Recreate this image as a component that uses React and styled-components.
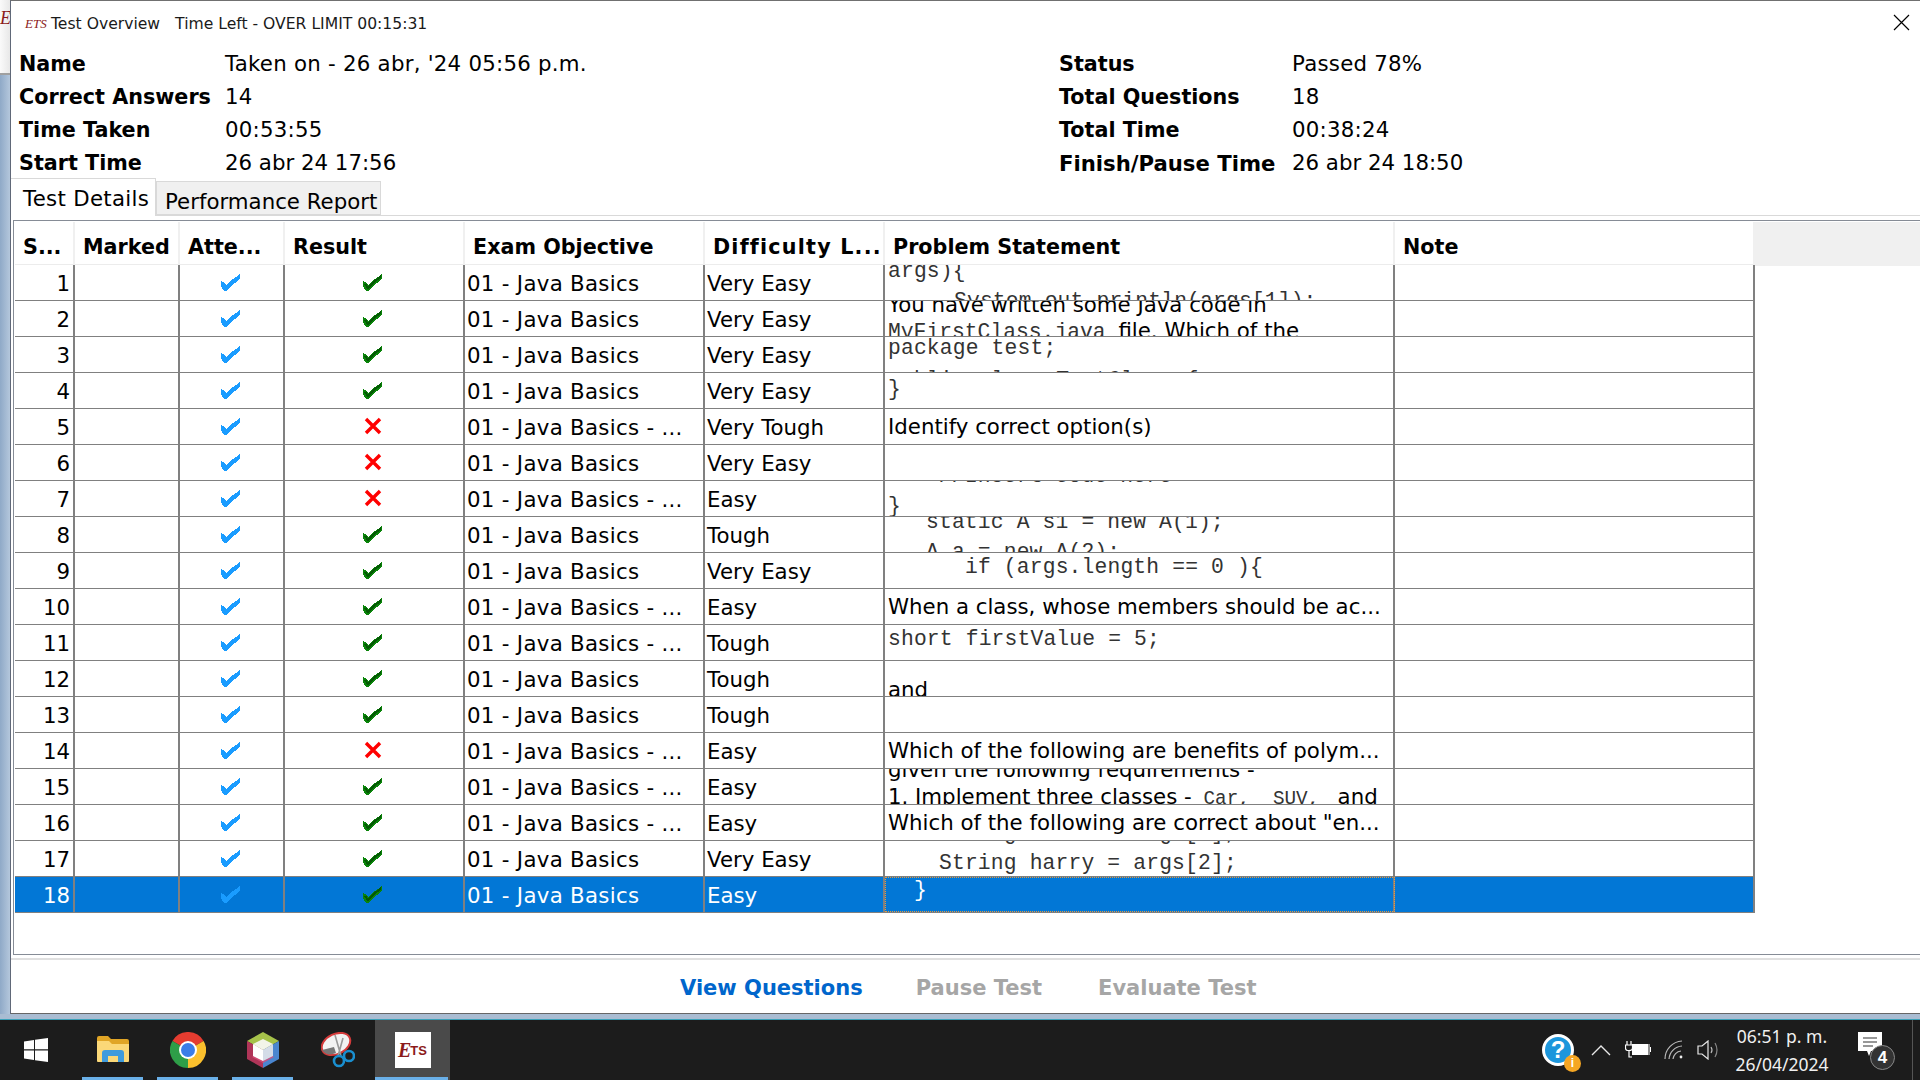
import React from "react";
import styled, { createGlobalStyle } from "styled-components";

const GlobalStyle = createGlobalStyle`
  html, body {
    margin: 0;
    padding: 0;
    background: #fff;
  }
  * {
    box-sizing: border-box;
  }
  body {
    font-family: "DejaVu Sans", "Liberation Sans", sans-serif;
    color: #000;
  }
`;

const Screen = styled.div`
  width: 1920px;
  height: 1080px;
  display: flex;
  flex-direction: column;
  overflow: hidden;
`;

const Desk = styled.div`
  display: flex;
  height: 1014px;
`;

const BackStrip = styled.div`
  width: 10px;
  display: flex;
  flex-direction: column;
  background: linear-gradient(90deg, #8fa9c7, #b4c7dc);
`;

const BackWindow = styled.div`
  height: 75px;
  padding-top: 8px;
  background: linear-gradient(90deg, #fafafa, #e8e8e8);
  border-bottom: 2px solid #a0a0a0;
  overflow: hidden;
  color: #8b1a1a;
  font: italic 18px "Liberation Serif", serif;
`;

const Window = styled.div`
  flex: 1;
  display: flex;
  flex-direction: column;
  background: #fff;
  border-top: 1px solid #707070;
  border-left: 1px solid #606878;
`;

const TitleBar = styled.div`
  height: 46px;
  display: flex;
  align-items: center;
  padding: 0 10px 0 14px;
  font-size: 15.6px;
  color: #1a1a1a;
`;

const TitleLogo = styled.span`
  width: 26px;
  color: #8b1a1a;
  font: italic 13px "Liberation Serif", serif;
`;

const TitleText = styled.span`
  margin-right: 15px;
`;

const Close = styled.svg`
  margin: -3px 0 0 auto;
  width: 17px;
  height: 17px;
`;

const Summary = styled.div`
  display: grid;
  grid-template-columns: 206px 834px 233px 1fr;
  grid-auto-rows: 33px;
  padding-left: 8px;
  height: 132px;
  font-size: 21.3px;
  line-height: 33px;
`;

const Label = styled.div`
  padding-top: 1px;
  font-size: ${(p) => p.$size || 20.7}px;
  font-weight: 700;
  white-space: nowrap;
`;

const Value = styled.div`
  letter-spacing: ${(p) => (p.$tight ? 0 : 0.25)}px;
`;

const Tabs = styled.div`
  display: flex;
  align-items: flex-end;
  height: 38px;
  margin-top: -1px;
  border-bottom: 1px solid #d9d9d9;
`;

const Tab = styled.div`
  font-size: 21.3px;
  height: ${(p) => (p.$active ? "38px" : "34px")};
  width: ${(p) => (p.$active ? "145px" : "225px")};
  margin-bottom: ${(p) => (p.$active ? "-1px" : "0")};
  padding: ${(p) => (p.$active ? "3px 0 0 12px" : "3px 0 0 8px")};
  background: ${(p) => (p.$active ? "#fff" : "#f0f0f0")};
  border: 1px solid #d9d9d9;
  border-left: ${(p) => (p.$active ? "none" : "1px solid #d9d9d9")};
  border-bottom: ${(p) => (p.$active ? "none" : "1px solid #d9d9d9")};
  letter-spacing: ${(p) => (p.$active ? 0.3 : 0)}px;
  line-height: 34px;
  white-space: nowrap;
`;

const Frame = styled.div`
  flex: 1;
  margin: 4px 0 0 2px;
  padding: 1px 0 0 1px;
  border-top: 1px solid #868c96;
  border-left: 1px solid #868c96;
  border-bottom: 1px solid #868c96;
`;

const HeaderRow = styled.div`
  display: grid;
  grid-template-columns: 60px 105px 105px 180px 240px 180px 510px 360px 1fr;
  height: 43px;
  border-bottom: 1px solid #ececec;
`;

const HeaderCell = styled.div`
  padding: 7px 0 0 ${(p) => p.$pad || 8}px;
  border-right: 2px solid #f0f0f0;
  font-size: 20.7px;
  font-weight: 700;
  letter-spacing: ${(p) => p.$spacing || 0}px;
  line-height: 37px;
  white-space: nowrap;
`;

const HeaderFiller = styled.div`
  background: #f0f0f0;
`;

const Row = styled.div`
  display: grid;
  grid-template-columns: 60px 105px 105px 180px 240px 180px 510px 360px;
  width: 1740px;
  height: 36px;
  border-bottom: 1px solid #808080;
  background: ${(p) => (p.$selected ? "#0277d6" : "#fff")};
  color: ${(p) => (p.$selected ? "#fff" : "#000")};
`;

const Cell = styled.div`
  border-right: 2px solid #808080;
  padding: 1px 3px 0 2px;
  overflow: hidden;
  display: flex;
  align-items: center;
  justify-content: ${(p) => p.$justify || "flex-start"};
  font-size: 21.3px;
  line-height: 35px;
  white-space: nowrap;
`;

const ExamCell = styled(Cell)`
  letter-spacing: 0.3px;
`;

const IconCell = styled(Cell)`
  justify-content: center;
  padding: 0 4px 2px 2px;
`;

const ProblemCell = styled.div`
  border-right: 2px solid #808080;
  overflow: hidden;
  padding-left: 3px;
  outline: ${(p) => (p.$focus ? "1px dotted #e89a3c" : "none")};
  outline-offset: -1px;
  white-space: pre;
`;

const ProblemLines = styled.div`
  margin-top: ${(p) => p.$top}px;
`;

const SansLine = styled.div`
  font-size: 21.3px;
  line-height: ${(p) => p.$height || 26}px;
`;

const CodeLine = styled.div`
  font-family: "Liberation Mono", monospace;
  font-size: 21.33px;
  letter-spacing: 0.15px;
  line-height: 30px;
  margin-top: ${(p) => p.$gap || 0}px;
  padding-left: ${(p) => p.$indent || 0}px;
  color: ${(p) => (p.$light ? "#fff" : "#333")};
`;

const InlineCode = styled.span`
  font-family: "Liberation Mono", monospace;
  font-size: ${(p) => p.$size || 21.33}px;
  margin-left: ${(p) => p.$gap || 0}px;
  color: #333;
`;

const Footer = styled.div`
  height: 56px;
  margin-top: 3px;
  padding: 2px 0 0 669px;
  display: flex;
  align-items: center;
  border-top: 2px solid #e0e0e0;
  border-bottom: 1px solid #666;
`;

const FooterButton = styled.div`
  margin-right: ${(p) => p.$gap || 0}px;
  font-size: 21px;
  font-weight: 700;
  color: ${(p) => (p.$enabled ? "#0066cc" : "#a6a6a6")};
`;

const BottomEdge = styled.div`
  height: 6px;
  background: #a9bcd2;
  border-bottom: 1px solid #3aa0b8;
`;

const Taskbar = styled.div`
  height: 60px;
  display: flex;
  align-items: stretch;
  background: #1c1c1c;
  color: #fff;
`;

const StartButton = styled.div`
  width: 75px;
  padding-left: 24px;
  display: flex;
  align-items: center;
`;

const TaskButton = styled.div`
  width: 75px;
  display: flex;
  align-items: center;
  justify-content: center;
  position: relative;
  background: ${(p) => (p.$active ? "#4a4a4a" : "transparent")};
  &::after {
    content: "";
    display: ${(p) => (p.$open ? "block" : "none")};
    position: absolute;
    left: ${(p) => (p.$active ? 0 : 7)}px;
    right: ${(p) => (p.$active ? 2 : 7)}px;
    bottom: 0;
    height: 3px;
    background: #6ab0e8;
  }
`;

const Tray = styled.div`
  margin-left: auto;
  display: flex;
  align-items: center;
  padding-right: 7px;
`;

const TraySlot = styled.div`
  width: ${(p) => p.$w}px;
  display: flex;
  justify-content: center;
  align-items: center;
`;

const HelpBadge = styled.div`
  width: 32px;
  height: 32px;
  border-radius: 50%;
  background: #1c96dc;
  border: 3px solid #fff;
  display: flex;
  align-items: center;
  justify-content: center;
  position: relative;
  font: 700 24px "Liberation Sans", sans-serif;
`;

const InfoBadge = styled.div`
  position: absolute;
  right: -10px;
  bottom: -9px;
  width: 17px;
  height: 17px;
  border-radius: 50%;
  background: #f5a623;
  font: 700 12px/17px "Liberation Sans", sans-serif;
  text-align: center;
`;

const Clock = styled.div`
  width: 112px;
  font: 17.5px/28px "Noto Sans", sans-serif;
  text-align: center;
  color: #f0f0f0;
  white-space: nowrap;
`;

const Notification = styled.div`
  position: relative;
  width: 56px;
  height: 36px;
  display: flex;
  padding-left: 20px;
  align-items: flex-start;
`;

const NotifyCount = styled.div`
  position: absolute;
  left: 32px;
  top: 13px;
  width: 25px;
  height: 25px;
  border-radius: 50%;
  background: #333;
  border: 1px solid #888;
  font: 700 17px/23px "Liberation Sans", sans-serif;
  text-align: center;
`;

const ShowDesktop = styled.div`
  width: 1px;
  align-self: stretch;
  margin-left: 18px;
  background: #555;
`;

const EtsTile = styled.div`
  width: 36px;
  height: 36px;
  background: #fff;
  color: #8b1a1a;
  display: flex;
  align-items: center;
  justify-content: center;
  font: italic 700 20px "Liberation Serif", serif;
  letter-spacing: -1px;
`;

const EtsSmall = styled.span`
  font: 700 13px "Liberation Sans", sans-serif;
  letter-spacing: 0;
`;

const BlueCheck = () => (
  <svg width="20" height="18" viewBox="0 0 20 18" shapeRendering="crispEdges">
    <polygon points="0,8 2,9 5,12 9,8 15,4 19,0 19,5 14,10 9,14 6,18 3,18 0,13" fill="#1a9cff" />
  </svg>
);

const GreenCheck = () => (
  <svg width="20" height="18" viewBox="0 0 20 18" shapeRendering="crispEdges">
    <polygon points="0,8 2,9 5,12 9,8 15,4 19,0 19,5 14,10 9,14 6,18 3,18 0,13" fill="#0a840a" />
    <polyline points="2,11 5,15 10,10 18,3" fill="none" stroke="#045804" strokeWidth="2" />
  </svg>
);

const RedCross = () => (
  <svg width="18" height="18" viewBox="0 0 18 18">
    <path d="M2 2 L16 16 M16 2 L2 16" stroke="#f00" strokeWidth="3.4" />
  </svg>
);

const WindowsLogo = () => (
  <svg width="24" height="24" viewBox="0 0 24 24" fill="#fff">
    <polygon points="0,3.5 10,2 10,11.3 0,11.3" />
    <polygon points="11,1.8 24,0 24,11.3 11,11.3" />
    <polygon points="0,12.5 10,12.5 10,22 0,20.5" />
    <polygon points="11,12.5 24,12.5 24,24 11,22.2" />
  </svg>
);

const FolderIcon = () => (
  <svg width="32" height="28" viewBox="0 0 32 28">
    <path d="M0 2 Q0 0 2 0 H11 L14 3 H30 Q32 3 32 5 V8 H0Z" fill="#e0a526" />
    <path d="M0 5 H12 L15 8 H32 V25 Q32 26 31 26 H1 Q0 26 0 25Z" fill="#fbd878" />
    <path d="M5 26 V17 Q5 14 8 14 H24 Q27 14 27 17 V26 H21 V20 H11 V26Z" fill="#3f9bdc" />
  </svg>
);

const ChromeIcon = () => (
  <svg width="36" height="36" viewBox="0 0 36 36">
    <path d="M18 18 L2.4 9 A18 18 0 0 1 33.6 9Z" fill="#e53c30" />
    <path d="M18 18 L33.6 9 A18 18 0 0 1 18 36Z" fill="#fbc02d" />
    <path d="M18 18 L18 36 A18 18 0 0 1 2.4 9Z" fill="#2e9e48" />
    <circle cx="18" cy="18" r="9" fill="#fff" />
    <circle cx="18" cy="18" r="7" fill="#3b7de8" />
  </svg>
);

const NetbeansIcon = () => (
  <svg width="32" height="36" viewBox="0 0 32 36">
    <polygon points="16,0 32,9 16,18 0,9" fill="#a6c24a" />
    <polygon points="0,9 16,18 16,36 0,27" fill="#b03558" />
    <polygon points="32,9 16,18 16,36 32,27" fill="#4a86d0" />
    <polygon points="16,31 5,25 16,18 27,25" fill="#d94f7a" opacity="0.8" />
    <polygon points="16,7 26,12 16,18 6,12" fill="#f2f4e8" />
    <polygon points="6,12 16,18 16,29 6,24" fill="#fff" />
    <polygon points="26,12 16,18 16,29 26,24" fill="#d4dce8" />
  </svg>
);

const SnipIcon = () => (
  <svg width="34" height="36" viewBox="0 0 34 36">
    <ellipse cx="15" cy="12" rx="15" ry="10" transform="rotate(-25 15 12)" fill="#f2f2f2" stroke="#d43a3a" strokeWidth="2" />
    <path d="M1 18 Q6 25 15 21 L13 15Z" fill="#777" />
    <path d="M14 3 L20 24 M22 6 L17 24" stroke="#999" strokeWidth="1.6" />
    <circle cx="18" cy="29" r="5" fill="none" stroke="#1a8fd0" strokeWidth="2.6" />
    <circle cx="28" cy="24" r="5" fill="none" stroke="#1a8fd0" strokeWidth="2.6" />
  </svg>
);

const ChevronIcon = () => (
  <svg width="20" height="12" viewBox="0 0 20 12">
    <path d="M1 11 L10 2 L19 11" fill="none" stroke="#e8e8e8" strokeWidth="1.4" />
  </svg>
);

const BatteryIcon = () => (
  <svg width="26" height="18" viewBox="0 0 26 18">
    <path d="M2 0 V4 M6 0 V4 M0.5 4 H7.5 V7 Q7.5 9.5 4 9.5 Q0.5 9.5 0.5 7Z M4 9.5 V16 H7" fill="none" stroke="#fff" strokeWidth="1.2" />
    <rect x="7" y="3" width="16" height="11" fill="#fff" />
    <rect x="23.5" y="3" width="1" height="11" fill="#fff" />
    <rect x="25" y="6" width="1" height="5" fill="#fff" />
  </svg>
);

const WifiIcon = () => (
  <svg width="20" height="20" viewBox="0 0 20 20" fill="none" stroke="#bbb" strokeWidth="1.2">
    <path d="M1 19 A18 18 0 0 1 18 1" />
    <path d="M5 19 A14 14 0 0 1 18 6" />
    <path d="M9 19 A9 9 0 0 1 17 11" />
    <circle cx="17" cy="17" r="1.4" fill="#eee" stroke="none" />
  </svg>
);

const SpeakerIcon = () => (
  <svg width="24" height="20" viewBox="0 0 24 20" fill="none" stroke="#e8e8e8" strokeWidth="1.2">
    <path d="M1 6 H5 L11 1 V19 L5 14 H1Z" />
    <path d="M14 7 Q16 10 14 13" stroke="#bbb" />
    <path d="M18 3 Q22 10 18 17" stroke="#888" />
  </svg>
);

const NotifyIcon = () => (
  <svg width="24" height="24" viewBox="0 0 24 24">
    <path d="M0 0 H24 V19 H13 L11 24 L9 19 H0Z" fill="#fff" />
    <path d="M5 6 H19 M5 10 H19 M5 14 H15" stroke="#333" strokeWidth="1.1" />
  </svg>
);

const rows = [
  { n: 1, ok: true, exam: "01 - Java Basics", diff: "Very Easy", top: -9, lines: [{ code: "args){" }, { code: "System.out.println(args[1]);", indent: 66 }] },
  { n: 2, ok: true, exam: "01 - Java Basics", diff: "Very Easy", top: -9, lines: [{ sans: "You have written some Java code in" }, { sans: "file. Which of the", before: "MyFirstClass.java" }] },
  { n: 3, ok: true, exam: "01 - Java Basics", diff: "Very Easy", top: -4, lines: [{ code: "package test;" }, { code: "public class TestClass {", gap: 2 }] },
  { n: 4, ok: true, exam: "01 - Java Basics", diff: "Very Easy", top: 1, lines: [{ code: "}" }] },
  { n: 5, ok: false, exam: "01 - Java Basics - ...", diff: "Very Tough", top: 5, lines: [{ sans: "Identify correct option(s)" }] },
  { n: 6, ok: false, exam: "01 - Java Basics", diff: "Very Easy", top: 0, lines: [] },
  { n: 7, ok: false, exam: "01 - Java Basics - ...", diff: "Easy", top: -20, lines: [{ code: "//Insert code here", indent: 51 }, { code: "}" }] },
  { n: 8, ok: true, exam: "01 - Java Basics", diff: "Tough", top: -10, lines: [{ code: "static A s1 = new A(1);", indent: 38 }, { code: "A a = new A(2);", indent: 38 }] },
  { n: 9, ok: true, exam: "01 - Java Basics", diff: "Very Easy", top: -1, lines: [{ code: "if (args.length == 0 ){", indent: 77 }] },
  { n: 10, ok: true, exam: "01 - Java Basics - ...", diff: "Easy", top: 5, lines: [{ sans: "When a class, whose members should be ac..." }] },
  { n: 11, ok: true, exam: "01 - Java Basics - ...", diff: "Tough", top: -1, lines: [{ code: "short firstValue = 5;" }] },
  { n: 12, ok: true, exam: "01 - Java Basics", diff: "Tough", top: 16, lines: [{ sans: "and" }] },
  { n: 13, ok: true, exam: "01 - Java Basics", diff: "Tough", top: 0, lines: [] },
  { n: 14, ok: false, exam: "01 - Java Basics - ...", diff: "Easy", top: 5, lines: [{ sans: "Which of the following are benefits of polym..." }] },
  { n: 15, ok: true, exam: "01 - Java Basics - ...", diff: "Easy", top: -13, lines: [{ sans: "given the following requirements -", height: 27 }, { sans: "1. Implement three classes - ", after: "Car,  SUV, ", tail: " and", height: 27 }] },
  { n: 16, ok: true, exam: "01 - Java Basics - ...", diff: "Easy", top: 5, lines: [{ sans: 'Which of the following are correct about "en...' }] },
  { n: 17, ok: true, exam: "01 - Java Basics", diff: "Very Easy", top: -23, lines: [{ code: "String ron   = args[1];", indent: 51 }, { code: "String harry = args[2];", indent: 51 }] },
  { n: 18, ok: true, exam: "01 - Java Basics", diff: "Easy", top: -2, lines: [{ code: "}", indent: 26 }], selected: true },
];

const ProblemLine = ({ line, light }) => {
  if (line.code) {
    return (
      <CodeLine $indent={line.indent} $gap={line.gap} $light={light}>
        {line.code}
      </CodeLine>
    );
  }
  return (
    <SansLine $height={line.height}>
      {line.before && <InlineCode>{line.before} </InlineCode>}
      {line.sans}
      {line.after && (
        <InlineCode $size={19.3} $gap={5}>
          {line.after}
        </InlineCode>
      )}
      {line.tail}
    </SansLine>
  );
};

const App = () => {
  return (
    <Screen>
      <GlobalStyle />
      <Desk>
        <BackStrip>
          <BackWindow>E</BackWindow>
        </BackStrip>
        <Window>
          <TitleBar>
            <TitleLogo>ETS</TitleLogo>
            <TitleText>Test Overview</TitleText>
            <TitleText>Time Left - OVER LIMIT 00:15:31</TitleText>
            <Close viewBox="0 0 17 17">
              <path d="M1 1 L16 16 M16 1 L1 16" stroke="#000" strokeWidth="1.2" fill="none" />
            </Close>
          </TitleBar>
          <Summary>
            <Label>Name</Label>
            <Value>Taken on - 26 abr, '24 05:56 p.m.</Value>
            <Label>Status</Label>
            <Value>Passed 78%</Value>
            <Label>Correct Answers</Label>
            <Value>14</Value>
            <Label>Total Questions</Label>
            <Value>18</Value>
            <Label>Time Taken</Label>
            <Value>00:53:55</Value>
            <Label>Total Time</Label>
            <Value>00:38:24</Value>
            <Label>Start Time</Label>
            <Value $tight>26 abr 24 17:56</Value>
            <Label $size={21.2}>Finish/Pause Time</Label>
            <Value $tight>26 abr 24 18:50</Value>
          </Summary>
          <Tabs>
            <Tab $active>Test Details</Tab>
            <Tab>Performance Report</Tab>
          </Tabs>
          <Frame>
            <HeaderRow>
              <HeaderCell>S...</HeaderCell>
              <HeaderCell>Marked</HeaderCell>
              <HeaderCell $pad={8}>Atte...</HeaderCell>
              <HeaderCell $pad={8}>Result</HeaderCell>
              <HeaderCell $pad={8}>Exam Objective</HeaderCell>
              <HeaderCell $pad={8} $spacing={1.2}>Difficulty L...</HeaderCell>
              <HeaderCell $pad={8}>Problem Statement</HeaderCell>
              <HeaderCell $pad={8}>Note</HeaderCell>
              <HeaderFiller />
            </HeaderRow>
            {rows.map((row) => (
              <Row key={row.n} $selected={row.selected}>
                <Cell $justify="flex-end">{row.n}</Cell>
                <Cell />
                <IconCell>
                  <BlueCheck />
                </IconCell>
                <IconCell>{row.ok ? <GreenCheck /> : <RedCross />}</IconCell>
                <ExamCell>{row.exam}</ExamCell>
                <Cell>{row.diff}</Cell>
                <ProblemCell $focus={row.selected}>
                  <ProblemLines $top={row.top}>
                    {row.lines.map((line, i) => (
                      <ProblemLine key={i} line={line} light={row.selected} />
                    ))}
                  </ProblemLines>
                </ProblemCell>
                <Cell />
              </Row>
            ))}
          </Frame>
          <Footer>
            <FooterButton $enabled $gap={53}>View Questions</FooterButton>
            <FooterButton $gap={56}>Pause Test</FooterButton>
            <FooterButton>Evaluate Test</FooterButton>
          </Footer>
        </Window>
      </Desk>
      <BottomEdge />
      <Taskbar>
        <StartButton>
          <WindowsLogo />
        </StartButton>
        <TaskButton $open>
          <FolderIcon />
        </TaskButton>
        <TaskButton $open>
          <ChromeIcon />
        </TaskButton>
        <TaskButton $open>
          <NetbeansIcon />
        </TaskButton>
        <TaskButton>
          <SnipIcon />
        </TaskButton>
        <TaskButton $open $active>
          <EtsTile>
            E<EtsSmall>TS</EtsSmall>
          </EtsTile>
        </TaskButton>
        <Tray>
          <TraySlot $w={48}>
            <HelpBadge>
              ?<InfoBadge>i</InfoBadge>
            </HelpBadge>
          </TraySlot>
          <TraySlot $w={38}>
            <ChevronIcon />
          </TraySlot>
          <TraySlot $w={36}>
            <BatteryIcon />
          </TraySlot>
          <TraySlot $w={36}>
            <WifiIcon />
          </TraySlot>
          <TraySlot $w={34}>
            <SpeakerIcon />
          </TraySlot>
          <Clock>
            <div>06:51 p. m.</div>
            <div>26/04/2024</div>
          </Clock>
          <Notification>
            <NotifyIcon />
            <NotifyCount>4</NotifyCount>
          </Notification>
          <ShowDesktop />
        </Tray>
      </Taskbar>
    </Screen>
  );
};

export default App;
